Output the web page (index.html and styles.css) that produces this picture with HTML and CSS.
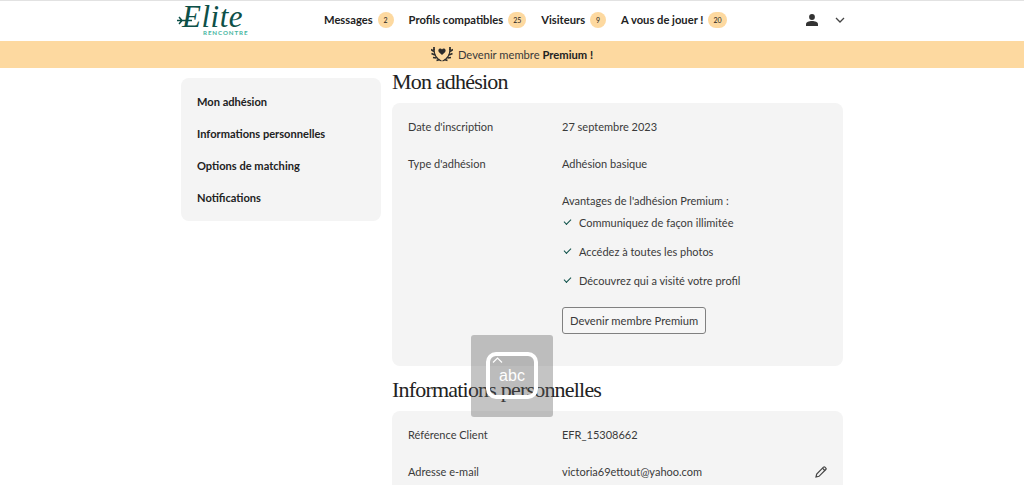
FILE: index.html
```html
<!DOCTYPE html>
<html lang="fr">
<head>
<meta charset="UTF-8">
<title>Mon adhésion</title>
<link rel="stylesheet" href="styles.css">
</head>
<body>

<header class="topbar">
    <div class="topbar-inner">
        <a class="logo" href="#">
            <span class="logo-name">Elite</span>
            <span class="logo-sub">RENCONTRE</span>
            <svg class="logo-arrow" width="16" height="10" viewBox="0 0 16 10"><path d="M0 5.500h15M2 2l3 3.500L2 9" fill="none" stroke="#0d5048" stroke-width="1.500"/></svg>
        </a>
        <nav class="mainnav">
            <a href="#">Messages <span class="count">2</span></a>
            <a href="#">Profils compatibles <span class="count">25</span></a>
            <a href="#">Visiteurs <span class="count">9</span></a>
            <a href="#">A vous de jouer ! <span class="count">20</span></a>
        </nav>
        <div class="account">
            <svg width="12" height="12" viewBox="0 0 12 12"><circle cx="6" cy="3" r="2.900" fill="#333"/><path d="M0 12V10.200C0 8.200 3 7 6 7s6 1.200 6 3.200V12Z" fill="#333"/></svg>
            <svg width="10" height="6" viewBox="0 0 10 6"><path d="M1 1l4 4 4-4" fill="none" stroke="#444" stroke-width="1.300"/></svg>
        </div>
    </div>
</header>

<div class="promo">
    <svg width="22" height="15" viewBox="0 0 22 15">
        <path d="M11 8 7.800 5C6.800 3.600 7.600 1.500 9.200 1.500c.8 0 1.400.4 1.800 1.100.4-.7 1-1.100 1.800-1.100 1.600 0 2.400 2.100 1.400 3.500Z" fill="#2b2b2b"/>
        <path d="M3 2c0 6 2.500 10 7.500 12M19 2c0 6-2.500 10-7.500 12" fill="none" stroke="#2b2b2b" stroke-width="1.200"/>
        <path d="M0 2.500l3 2M.5 6.500l3.500 1.500M2 10.500l3.500.5M5.500 13.500l3-1M3 0v3M22 2.500l-3 2M21.500 6.500l-3.500 1.500M20 10.500l-3.500.5M16.500 13.500l-3-1M19 0v3" fill="none" stroke="#2b2b2b" stroke-width="1.700"/>
    </svg>
    <span>Devenir membre <b>Premium !</b></span>
</div>

<div class="page">
    <aside class="sidemenu">
        <a href="#">Mon adhésion</a>
        <a href="#">Informations personnelles</a>
        <a href="#">Options de matching</a>
        <a href="#">Notifications</a>
    </aside>

    <main class="content">
        <h1>Mon adhésion</h1>
        <section class="card">
            <div class="row">
                <div class="label">Date d'inscription</div>
                <div class="value">27 septembre 2023</div>
            </div>
            <div class="row">
                <div class="label">Type d'adhésion</div>
                <div class="value">Adhésion basique</div>
            </div>
            <div class="row perks">
                <div class="label"></div>
                <div class="value">
                    <p>Avantages de l'adhésion Premium :</p>
                    <ul>
                        <li>Communiquez de façon illimitée</li>
                        <li>Accédez à toutes les photos</li>
                        <li>Découvrez qui a visité votre profil</li>
                    </ul>
                    <button>Devenir membre Premium</button>
                </div>
            </div>
        </section>

        <h1>Informations personnelles</h1>
        <section class="card">
            <div class="row">
                <div class="label">Référence Client</div>
                <div class="value">EFR_15308662</div>
            </div>
            <div class="row">
                <div class="label">Adresse e-mail</div>
                <div class="value">victoria69ettout@yahoo.com</div>
                <svg class="edit" width="12" height="12" viewBox="0 0 12 12"><path d="M1 11l.7-3L8.500 1.200c.4-.4 1-.4 1.400 0l.9.9c.4.4.4 1 0 1.400L4 10.300Z" fill="none" stroke="#444" stroke-width="1.200"/><path d="M7.500 2.200l2.300 2.300" stroke="#444" stroke-width="1.200"/></svg>
            </div>
        </section>
    </main>
</div>

<div class="kbd-hint">
    <div class="kbd-key">
        <svg class="kbd-caret" width="11" height="6" viewBox="0 0 11 6"><path d="M1 5.500 5.500 1 10 5.500" fill="none" stroke="#fff" stroke-width="1.200"/></svg>
        <span>abc</span>
    </div>
</div>

</body>
</html>
```

FILE: styles.css
```css
html, body {
    height: 485px;
    overflow: hidden;
}
body {
    margin: 0;
    font-family: 'Lato', 'Open Sans', sans-serif;
    font-size: 11px;
    color: #3a3a3a;
    background-color: #fff;
}
a {
    color: inherit;
    text-decoration: none;
}

.topbar {
    height: 40px;
    border-top: 1px solid #e2e2e2;
}
.topbar-inner {
    display: flex;
    align-items: center;
    box-sizing: border-box;
    height: 100%;
    width: 670px;
    margin-left: 177px;
    padding-bottom: 3px;
}
.logo {
    position: relative;
    width: 147px;
    height: 37px;
    flex: none;
}
.logo-name {
    position: absolute;
    left: 5px;
    top: 3px;
    font-family: 'Liberation Serif', serif;
    font-style: italic;
    font-size: 31px;
    line-height: 25px;
    letter-spacing: 0.5px;
    color: #0d5048;
}
.logo-sub {
    position: absolute;
    left: 26px;
    top: 28px;
    font-size: 6.200px;
    font-weight: 700;
    line-height: 7px;
    letter-spacing: 0.9px;
    color: #45b5a0;
}
.logo-arrow {
    position: absolute;
    left: 0;
    top: 14px;
}
.mainnav {
    display: flex;
    gap: 15px;
    font-weight: 700;
    font-size: 11.200px;
    color: #222;
}
.mainnav a {
    display: flex;
    align-items: center;
    gap: 5px;
}
.count {
    box-sizing: border-box;
    min-width: 16px;
    height: 16px;
    padding: 0 5px;
    border-radius: 8px;
    background-color: #fdd9a0;
    font-size: 7px;
    font-weight: 400;
    line-height: 16px;
    text-align: center;
}
.account {
    display: flex;
    align-items: center;
    gap: 17px;
    margin-left: auto;
    margin-right: 2px;
}

.promo {
    display: flex;
    justify-content: center;
    align-items: center;
    gap: 5px;
    height: 27px;
    background-color: #fdd9a0;
    font-size: 11.200px;
}
.promo b {
    color: #222;
}

.page {
    display: flex;
    gap: 11px;
    margin-left: 181px;
    width: 662px;
}
.sidemenu {
    flex: none;
    align-self: flex-start;
    box-sizing: border-box;
    width: 200px;
    height: 143px;
    margin-top: 10px;
    padding: 8px 16px;
    background-color: #f4f4f4;
    border-radius: 8px;
    font-size: 11.100px;
    font-weight: 700;
    color: #222;
}
.sidemenu a {
    display: block;
    height: 32px;
    line-height: 32px;
}
.content {
    flex: 1;
}
h1 {
    margin: 0;
    height: 35px;
    font-family: 'Liberation Serif', serif;
    font-weight: 400;
    font-size: 22px;
    line-height: 28px;
    letter-spacing: -0.8px;
    color: #222;
}
.card {
    position: relative;
    box-sizing: border-box;
    padding: 8px 16px 32px;
    margin-bottom: 10px;
    background-color: #f4f4f4;
    border-radius: 8px;
}
.row {
    display: flex;
    position: relative;
    min-height: 37px;
    line-height: 32px;
}
.label {
    flex: none;
    width: 154px;
}
.perks p {
    margin: 0;
    height: 23px;
}
ul {
    list-style: none;
    margin: 0;
    padding: 0;
}
li {
    position: relative;
    height: 29px;
    line-height: 29px;
    padding-left: 17px;
}
li::before {
    content: '';
    position: absolute;
    left: 2px;
    top: 11px;
    width: 6px;
    height: 3px;
    border-left: 1.200px solid #0d5048;
    border-bottom: 1.200px solid #0d5048;
    transform: rotate(-45deg);
}
button {
    display: block;
    margin-top: 12px;
    height: 27px;
    padding: 0 7px;
    font: inherit;
    font-size: 11.200px;
    line-height: 25px;
    color: #3a3a3a;
    background-color: #f6f6f6;
    border: 1px solid #808080;
    border-radius: 3px;
}
.edit {
    position: absolute;
    right: 0;
    top: 10px;
}

.kbd-hint {
    position: absolute;
    left: 471px;
    top: 335px;
    display: flex;
    justify-content: center;
    align-items: center;
    width: 82px;
    height: 82px;
    background-color: rgba(100, 100, 100, 0.38);
    border-radius: 3px;
}
.kbd-key {
    position: relative;
    box-sizing: border-box;
    width: 52px;
    height: 47px;
    margin-top: -1px;
    border: 4px solid #fff;
    border-radius: 10px;
    background-color: rgba(0, 0, 0, 0.04);
    color: #fff;
    font-family: 'Liberation Sans', sans-serif;
    font-size: 16px;
    text-align: center;
    line-height: 39px;
}
.kbd-caret {
    position: absolute;
    left: 2px;
    top: 1px;
}
```
